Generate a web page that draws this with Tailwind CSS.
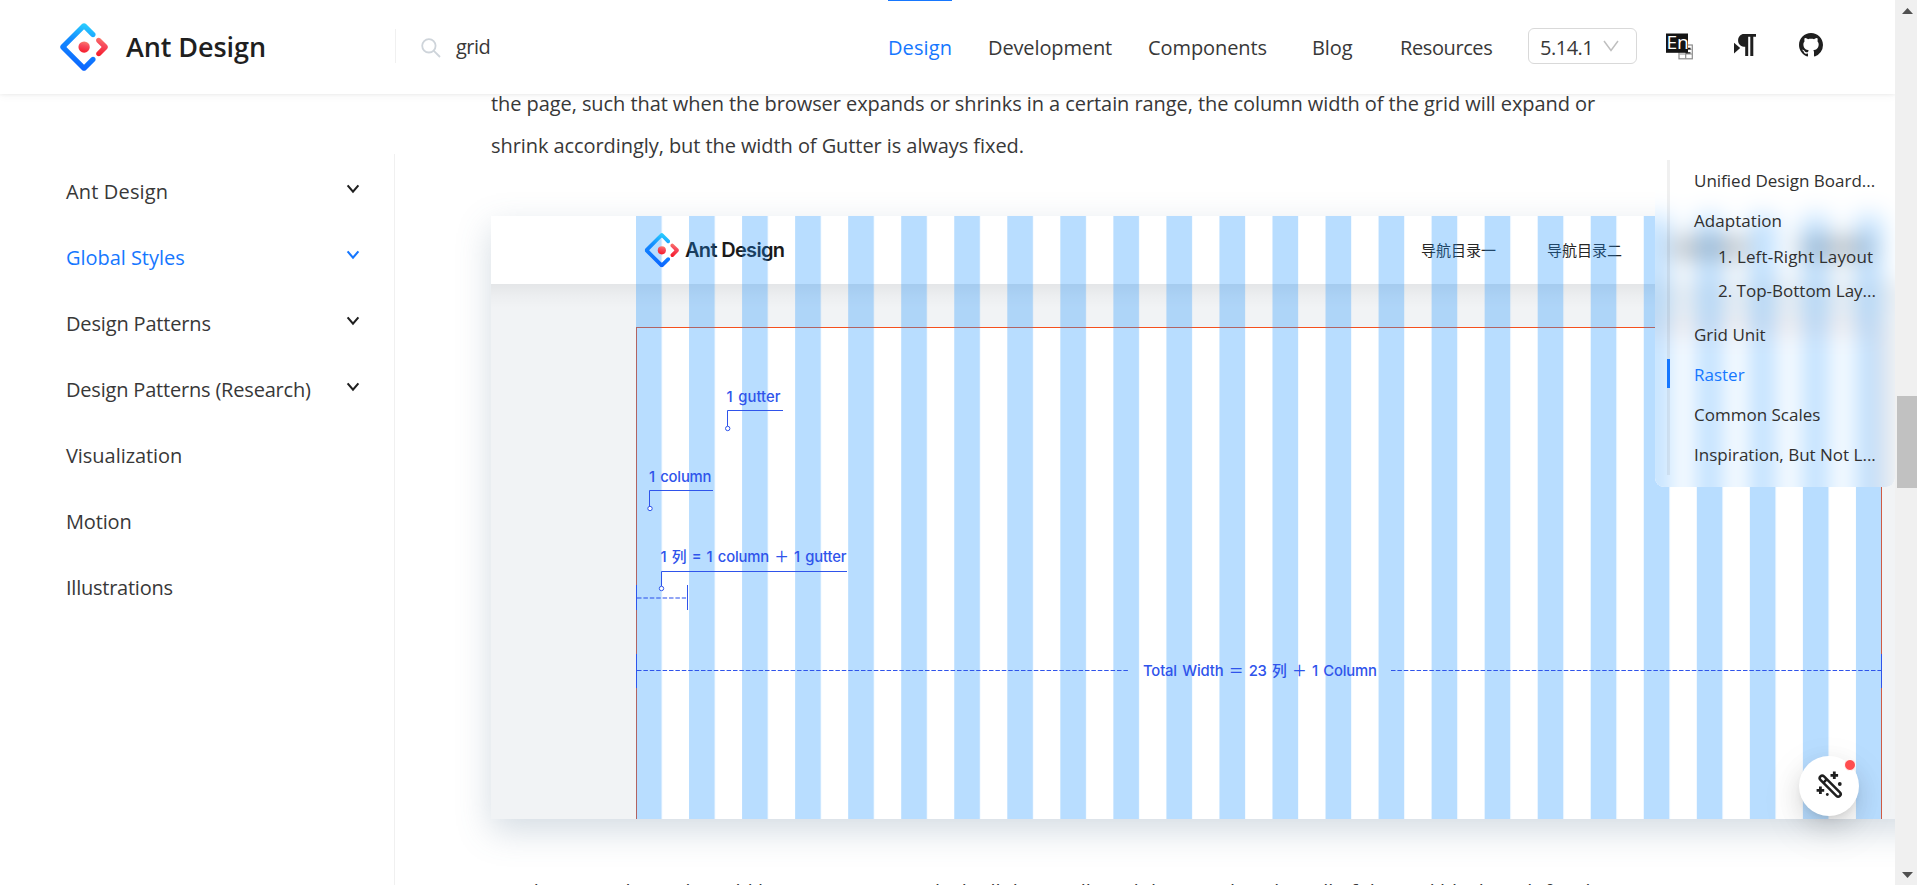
<!DOCTYPE html>
<html lang="en">
<head>
<meta charset="utf-8">
<title>Layout - Ant Design</title>
<script src="https://cdn.jsdelivr.net/npm/@tailwindcss/browser@4"></script>
</head>
<body class="h-[885px] overflow-hidden bg-white text-[20px] text-[#383838]" style="font-family:'Open Sans','Noto Sans CJK SC',sans-serif">
<svg width="0" height="0" class="absolute">
  <defs>
    <linearGradient id="blueA" x1="0.62" y1="0" x2="0.4" y2="1"><stop offset="0" stop-color="#29cdff"/><stop offset="0.37" stop-color="#148eff"/><stop offset="1" stop-color="#0a60ff"/></linearGradient>
    <linearGradient id="redA" x1="0.7" y1="0" x2="0.5" y2="1"><stop offset="0" stop-color="#fa816e"/><stop offset="0.41" stop-color="#f74a5c"/><stop offset="1" stop-color="#f51d2c"/></linearGradient>
    <symbol id="logo" viewBox="0 0 200 200">
      <path fill="url(#blueA)" d="M91.588 4.177L4.18 91.513c-4.7 4.695-4.7 12.279 0 16.974l87.408 87.336c4.7 4.696 12.29 4.696 16.989 0l36.648-36.618c4.209-4.205 4.209-11.023 0-15.228s-11.031-4.205-15.24 0l-27.783 27.76c-1.17 1.169-2.945 1.169-4.114 0l-69.802-69.744c-1.17-1.169-1.17-2.942 0-4.111l69.802-69.744c1.169-1.169 2.944-1.169 4.114 0l27.783 27.76c4.209 4.205 11.032 4.205 15.24 0s4.209-11.023 0-15.227L108.58 4.056c-4.718-4.594-12.311-4.557-16.992.12z"/>
      <path fill="url(#redA)" d="M153.686 135.855c4.208 4.205 11.031 4.205 15.24 0l27.034-27.012c4.7-4.696 4.7-12.28 0-16.974l-27.27-27.151c-4.218-4.2-11.043-4.194-15.254.014-4.209 4.205-4.209 11.022 0 15.227l18.418 18.403c1.17 1.169 1.17 2.943 0 4.111l-18.168 18.154c-4.209 4.205-4.209 11.023 0 15.228z"/>
      <ellipse fill="url(#redA)" cx="100.5" cy="100.4" rx="23.6" ry="23.6"/>
    </symbol>
    <symbol id="down" viewBox="0 0 14 10"><path d="M1.6 1.4L7 7.7 12.4 1.4" fill="none" stroke="currentColor" stroke-width="2.1"/></symbol>
  </defs>
</svg>
<div class="flex h-full">
  <div class="relative h-full w-[1895px] overflow-hidden">

    <header class="relative z-20 flex h-[94px] bg-white shadow-[0_1px_3px_rgba(0,0,0,0.05),0_2px_9px_rgba(0,0,0,0.04)]">
      <div class="flex w-[395px] shrink-0 items-center pl-[60px]">
        <svg class="h-[48px] w-[48px]"><use href="#logo"/></svg>
        <span class="mt-px ml-[18px] whitespace-nowrap text-[27px] font-semibold tracking-[-0.08px] text-[#1f1f1f]">Ant Design</span>
      </div>
      <div class="mt-[29px] flex h-[34px] w-[493px] shrink-0 items-center border-l border-[#f0f0f0] pl-[25px]">
        <svg class="mt-[4px] h-[20px] w-[20px]" viewBox="0 0 20 20" fill="none" stroke="#ced4da" stroke-width="1.8"><circle cx="7.9" cy="7.8" r="6.7"/><path d="M12.6 12.6L19 19"/></svg>
        <span class="mt-[2px] ml-[15px] tracking-[-0.5px]">grid</span>
      </div>
      <nav class="flex shrink-0 whitespace-nowrap leading-[96px]">
        <a class="mr-[36px] w-[64px] border-t border-[#1677ff] leading-[94px] tracking-[0.09px] text-[#1677ff]">Design</a>
        <a class="mr-[36px] w-[124px] tracking-[-0.12px]">Development</a>
        <a class="mr-[45px] w-[119px] tracking-[-0.08px]">Components</a>
        <a class="mr-[47px] w-[41px] tracking-[-0.1px]">Blog</a>
        <a class="w-[128px] tracking-[-0.4px]">Resources</a>
      </nav>
      <div class="mt-[28px] flex h-[36px] w-[109px] shrink-0 items-center rounded-[6px] border border-[#d9d9d9] pl-[11px]">
        <span class="mt-[3px] tracking-[-0.5px]">5.14.1</span>
        <svg class="ml-[10px] h-[12px] w-[16px]" viewBox="0 0 16 12" fill="none" stroke="#bfbfbf" stroke-width="1.5"><path d="M1 1l7 9.4L15 1"/></svg>
      </div>
      <svg class="mt-[33px] ml-[29px] h-[27px] w-[28px] shrink-0" viewBox="0 0 28 27">
        <rect x="13" y="12" width="13.3" height="13.8" fill="#fff" stroke="#8c8c8c" stroke-width="1.2"/>
        <path d="M19.700 12v13.500M13.500 21H26M22 16.300h3.500" fill="none" stroke="#8c8c8c" stroke-width="1.2"/>
        <rect x="0" y="0.5" width="22" height="19.3" fill="#141414"/>
        <text x="0.4" y="16" font-family="Open Sans" font-size="17.500" textLength="22.500" lengthAdjust="spacingAndGlyphs" fill="#fff">En</text>
        <path d="M22 15.500h2.500M20 19.800h4.500" stroke="#141414" stroke-width="1.300"/>
      </svg>
      <svg class="mt-[34px] ml-[40px] h-[23px] w-[23px] shrink-0" viewBox="0 0 23 23" fill="#1f1f1f">
        <path d="M0 8.8L6.2 14 0 19.5z"/>
        <path d="M9.8 0H22v2.8h-2.7V22h-3V2.8h-2.1V22h-3v-9.300C7.500 12.700 4.100 10.500 4.100 6.400 4.100 2.500 7 0 9.800 0z"/>
      </svg>
      <svg class="mt-[33px] ml-[42px] h-[24px] w-[24px] shrink-0" viewBox="0 0 16 16" fill="#1f1f1f"><path d="M8 0C3.58 0 0 3.58 0 8c0 3.54 2.29 6.53 5.47 7.59.4.07.55-.17.55-.38 0-.19-.01-.82-.01-1.490-2.010.37-2.530-.49-2.690-.94-.09-.23-.48-.94-.82-1.130-.28-.15-.68-.52-.01-.53.63-.01 1.080.58 1.230.82.72 1.210 1.870.87 2.330.66.07-.52.28-.87.51-1.070-1.780-.2-3.640-.89-3.640-3.950 0-.87.31-1.590.82-2.150-.08-.2-.36-1.020.08-2.120 0 0 .67-.21 2.200.82.64-.18 1.320-.27 2-.27s1.360.09 2 .27c1.530-1.040 2.200-.82 2.200-.82.44 1.100.16 1.920.08 2.120.51.56.82 1.270.82 2.150 0 3.070-1.870 3.750-3.650 3.950.29.25.54.73.54 1.480 0 1.070-.01 1.930-.01 2.200 0 .21.15.46.55.38A8.010 8.010 0 0 0 16 8c0-4.420-3.580-8-8-8z"/></svg>
    </header>

    <div class="flex">
      <aside class="mt-[60px] h-[740px] w-[395px] shrink-0 border-r border-[#f0f0f0] pt-[5px] pl-[66px] text-[20px] tracking-[-0.16px]">
        <a class="flex h-[66px] items-center justify-between pr-[34px] tracking-[0.15px]"><span>Ant Design</span><svg class="-mt-[6px] h-[10px] w-[14px] text-[#1f1f1f]"><use href="#down"/></svg></a>
        <a class="flex h-[66px] items-center justify-between pr-[34px] tracking-[-0.04px] text-[#1677ff]"><span>Global Styles</span><svg class="-mt-[6px] h-[10px] w-[14px]"><use href="#down"/></svg></a>
        <a class="flex h-[66px] items-center justify-between pr-[34px]"><span>Design Patterns</span><svg class="-mt-[6px] h-[10px] w-[14px] text-[#1f1f1f]"><use href="#down"/></svg></a>
        <a class="flex h-[66px] items-center justify-between pr-[34px] tracking-[-0.19px]"><span>Design Patterns (Research)</span><svg class="-mt-[6px] h-[10px] w-[14px] text-[#1f1f1f]"><use href="#down"/></svg></a>
        <a class="flex h-[66px] items-center tracking-[-0.05px]">Visualization</a>
        <a class="flex h-[66px] items-center">Motion</a>
        <a class="flex h-[66px] items-center tracking-[-0.24px]">Illustrations</a>
      </aside>

      <article class="-mt-[11px] ml-[96px] w-[1404px] shrink-0">
        <p class="whitespace-nowrap leading-[42px] tracking-[-0.072px]">the page, such that when the browser expands or shrinks in a certain range, the column width of the grid will expand or<br>shrink accordingly, but the width of Gutter is always fixed.</p>

        <div class="mt-[49px] h-[603px] w-[1520px] bg-[#f1f3f5] shadow-[0_12px_32px_rgba(85,115,145,0.25)]">
          <svg class="block h-[603px] w-[1404px]" viewBox="0 0 1404 603" font-family="Inter, 'Noto Sans CJK SC', sans-serif">
            <defs>
              <linearGradient id="drop" x1="0" y1="0" x2="0" y2="1"><stop offset="0" stop-color="#000" stop-opacity="0.055"/><stop offset="0.5" stop-color="#000" stop-opacity="0.02"/><stop offset="1" stop-color="#000" stop-opacity="0"/></linearGradient>
              <pattern id="cols" x="145" y="0" width="53.04" height="603" patternUnits="userSpaceOnUse"><rect width="25.7" height="603" fill="#1890ff" fill-opacity="0.307"/></pattern>
            </defs>
            <rect x="0" y="0" width="1404" height="68" fill="#fff"/>
            <rect x="0" y="68" width="1404" height="24" fill="url(#drop)"/>
            <rect x="145.500" y="111.500" width="1245" height="500" fill="#fff" stroke="#f5501e"/>
            <text x="194" y="41" font-size="20" font-weight="600" fill="#1a1a1a" textLength="100">Ant Design</text>
            <g font-family="'Noto Sans CJK SC', sans-serif" font-size="15" fill="#262626">
              <text x="930" y="40">导航目录一</text><text x="1056" y="40">导航目录二</text>
            </g>
            <rect x="145" y="0" width="1246" height="603" fill="url(#cols)"/>
            <svg x="153.500" y="17" width="34.500" height="34.500"><use href="#logo"/></svg>
            <g fill="#2f54eb" font-size="14.800" font-weight="500" word-spacing="1.500">
              <text x="235.500" y="186" textLength="54">1 gutter</text>
              <text x="158" y="266" textLength="62.500">1 column</text>
              <text x="169.500" y="346" textLength="186">1 列 = 1 column ＋ 1 gutter</text>
              <text x="652" y="460" textLength="234">Total Width ＝ 23 列 ＋ 1 Column</text>
            </g>
            <g fill="none" stroke="#2f54eb" stroke-width="1">
              <path d="M292 194.500H236.500V210M222 274.500H158.500V290M356 355.500H170.500V370"/>
              <g fill="#fff"><circle cx="236.700" cy="212.500" r="2.200"/><circle cx="159" cy="292.500" r="2.200"/><circle cx="170.500" cy="372.500" r="2.200"/></g>
              <path d="M145.500 369V394M196.500 369V394M145.500 438V472M1390.500 438V472"/>
              <path d="M146 382H195" stroke-width="1.600" stroke-dasharray="4.500 1.900" stroke-opacity="0.700"/>
              <path d="M146 454.500H637M900 454.500H1390" stroke-dasharray="4.500 1.900"/>
            </g>
          </svg>
        </div>

        <p class="mt-[52px] whitespace-nowrap leading-[42px]">For the page, the grid would be a container in which all the small modules are placed; in all of the grid block, with fixed</p>
      </article>
    </div>

    <div class="absolute top-[148px] left-[1655px] z-10 h-[339px] w-[240px] overflow-hidden rounded-[9px] py-[12px] pl-[12px]">
      <!-- frosted backdrop of the anchor list -->
      <svg class="absolute top-0 left-0 h-[339px] w-[240px]" viewBox="0 0 240 339">
        <defs>
          <filter id="frost" filterUnits="userSpaceOnUse" x="-60" y="-60" width="360" height="460" color-interpolation-filters="sRGB"><feGaussianBlur stdDeviation="12"/></filter>
          <pattern id="frostCols" x="-1019" y="0" width="53.04" height="600" patternUnits="userSpaceOnUse"><rect width="25.7" height="600" fill="#1890ff" fill-opacity="0.307"/></pattern>
        </defs>
        <rect width="240" height="339" fill="#fff"/>
        <g filter="url(#frost)">
          <rect x="-100" y="-100" width="440" height="600" fill="#fff"/>
          <rect x="-100" y="136" width="440" height="400" fill="#f1f3f5"/>
          <rect x="-100" y="136" width="440" height="24" fill="url(#drop)"/>
          <rect x="-100" y="179.500" width="325.500" height="400" fill="#fff" stroke="#f5501e"/>
          <g fill="#262626" fill-opacity="0.42"><rect x="18" y="93" width="74" height="14"/><rect x="144" y="93" width="74" height="14"/></g>
          <rect x="-100" y="68" width="326" height="500" fill="url(#frostCols)"/>
        </g>
      </svg>
      <ul class="relative h-[315px] border-l-[3px] border-black/6 pt-px pl-[24px] text-[17px] whitespace-nowrap tracking-[0px] text-[#303030]">
        <li class="h-[40px] leading-[40px]">Unified Design Board...</li>
        <li class="h-[38px] leading-[40px] tracking-[0.05px]">Adaptation</li>
        <li class="h-[34px] pl-[24px] leading-[36px] tracking-[0.12px]">1. Left-Right Layout</li>
        <li class="h-[41px] pl-[24px] leading-[36px]">2. Top-Bottom Lay...</li>
        <li class="h-[40px] leading-[42px]">Grid Unit</li>
        <li class="h-[40px] leading-[42px] text-[#1677ff]">Raster</li>
        <li class="h-[40px] leading-[42px]">Common Scales</li>
        <li class="h-[40px] leading-[42px]">Inspiration, But Not L...</li>
        <li class="absolute top-[199px] -left-[3px] h-[29px] w-[3px] bg-[#1677ff]"></li>
      </ul>
    </div>

    <div class="absolute top-[756px] left-[1799px] z-10 h-[60px] w-[60px] rounded-full bg-white shadow-[0_9px_24px_rgba(0,0,0,0.12),0_4px_9px_-4px_rgba(0,0,0,0.12),0_14px_42px_8px_rgba(0,0,0,0.05)]">
      <svg class="h-[60px] w-[60px]" viewBox="0 0 60 60">
        <g transform="rotate(45 31 30)" fill="none" stroke="#1f1f1f" stroke-width="2.500"><rect x="17.500" y="27.500" width="27.500" height="5" rx="2.500"/><path d="M24 27.400v5.400"/></g>
        <path fill="#1f1f1f" d="M33.900 15.500h2.800v2.400h2.400v2.800h-2.400v2.400h-2.800v-2.400h-2.400v-2.800h2.400zM20 30.500h2.800v2.400h2.400v2.800h-2.400v2.400H20v-2.400h-2.400v-2.800H20z"/>
        <circle cx="40.800" cy="28" r="1.900" fill="#1f1f1f"/><circle cx="28.300" cy="38.500" r="1.400" fill="#1f1f1f"/>
      </svg>
      <span class="absolute top-[3px] right-[3px] h-[12px] w-[12px] rounded-full border-[1.500px] border-white bg-[#ff4d4f]"></span>
    </div>
  </div>

  <div class="flex h-full w-[22px] flex-col items-center bg-[#f0f0f0]">
    <svg class="mt-[8px] ml-[2px] h-[6px] w-[11px]" viewBox="0 0 11 6"><path d="M5.500 0L11 6H0z" fill="#505050"/></svg>
    <div class="mt-[382px] ml-[2px] h-[92px] w-[20px] bg-[#c1c1c1]"></div>
    <svg class="mt-[384px] ml-[2px] h-[6px] w-[11px]" viewBox="0 0 11 6"><path d="M0 0h11L5.500 6z" fill="#505050"/></svg>
  </div>
</div>
</body>
</html>
